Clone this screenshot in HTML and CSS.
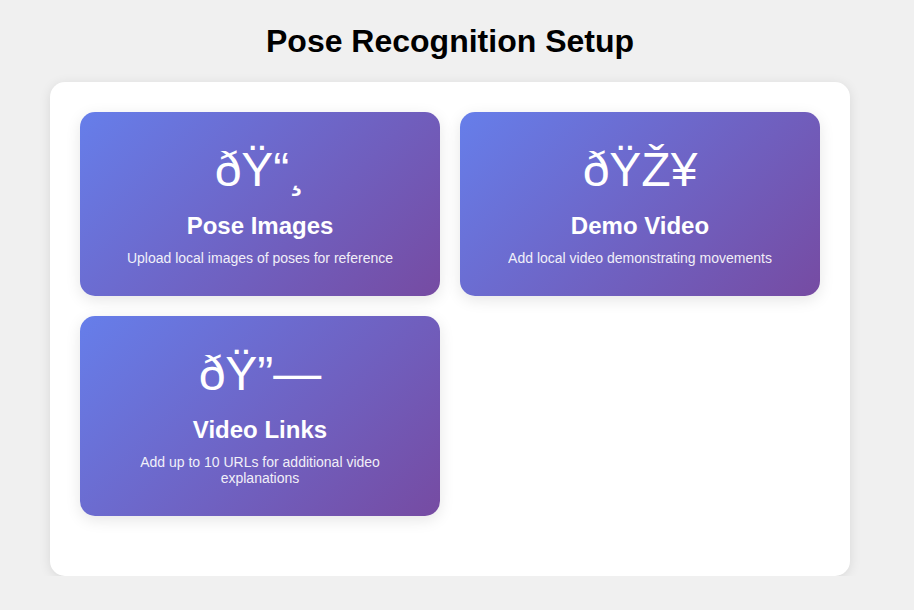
FILE: index.html
```html
<!DOCTYPE html>
<html lang="en">
<head>
<meta charset="utf-8">
<title>Pose Recognition Setup</title>
<link rel="stylesheet" href="styles.css">
</head>
<body>
  <div class="page">
    <h1 class="title">Pose Recognition Setup</h1>
    <div class="panel">
      <div class="grid">
        <div class="card">
          <div class="card-icon">ðŸ“¸</div>
          <h3 class="card-title">Pose Images</h3>
          <p class="card-desc">Upload local images of poses for reference</p>
        </div>
        <div class="card">
          <div class="card-icon">ðŸŽ¥</div>
          <h3 class="card-title">Demo Video</h3>
          <p class="card-desc">Add local video demonstrating movements</p>
        </div>
        <div class="card">
          <div class="card-icon">ðŸ”—</div>
          <h3 class="card-title">Video Links</h3>
          <p class="card-desc">Add up to 10 URLs for additional video explanations</p>
        </div>
      </div>
    </div>
  </div>
</body>
</html>
```
FILE: styles.css
```css
html, body {
  margin: 0;
  padding: 0;
}
body {
  background: #f0f0f0;
  font-family: "Liberation Sans", Arial, sans-serif;
}
.page {
  width: 800px;
  margin-left: 50px;
  padding-top: 20px;
}
.title {
  margin: 0 0 20px;
  text-align: center;
  font-size: 32px;
  font-weight: bold;
  color: #000;
  line-height: 42px;
}
.panel {
  background: #fff;
  border-radius: 15px;
  box-shadow: 0 2px 12px rgba(0, 0, 0, 0.1);
  padding: 30px 30px 60px;
}
.grid {
  display: grid;
  grid-template-columns: 1fr 1fr;
  gap: 20px;
}
.card {
  background: linear-gradient(135deg, #667eea 0%, #764ba2 100%);
  border-radius: 15px;
  padding: 30px;
  color: #fff;
  text-align: center;
  box-shadow: 0 4px 15px rgba(0, 0, 0, 0.1);
}
.card-icon {
  font-size: 48px;
  line-height: normal;
  margin-bottom: 15px;
}
.card-title {
  margin: 0 0 10px;
  font-size: 24px;
  font-weight: bold;
  line-height: normal;
}
.card-desc {
  margin: 0;
  font-size: 14px;
  line-height: 16px;
  opacity: 0.9;
}
```
